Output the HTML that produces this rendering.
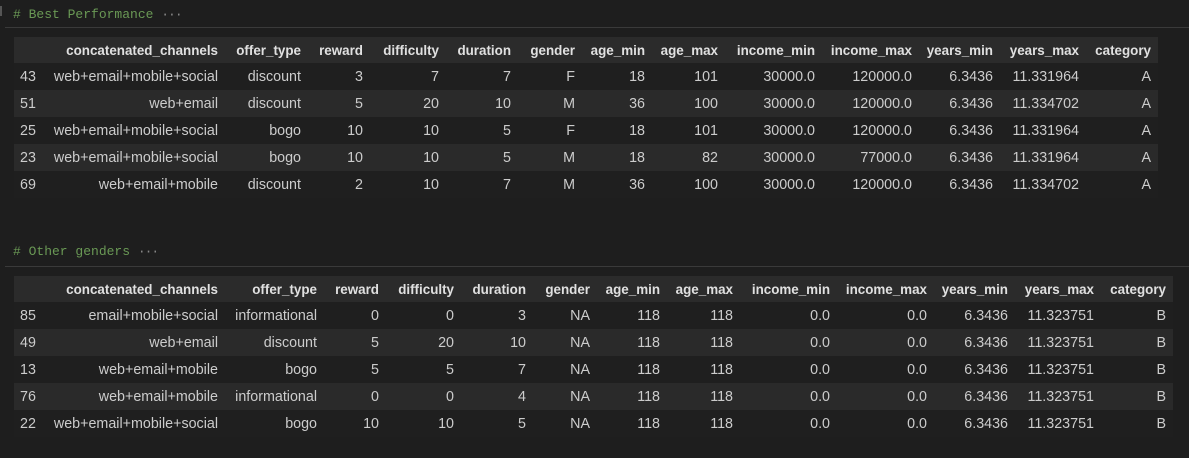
<!DOCTYPE html>
<html><head><meta charset="utf-8"><style>
body{margin:0;background:#1e1e1e;width:1189px;height:458px;overflow:hidden;position:relative;font-family:"Liberation Sans",sans-serif;}
.md{position:absolute;left:13px;font-family:"Liberation Mono",monospace;font-size:13px;color:#6a9955;}
.md span{color:#888;letter-spacing:-1px}
.sep{position:absolute;left:5px;right:0;height:1px;background:#3a3a3a;}
table{position:absolute;left:14px;border-collapse:collapse;table-layout:fixed;font-size:14.3px;color:#cccccc;}
td,th{height:27px;padding:0;text-align:right;white-space:nowrap;overflow:hidden}
th{font-weight:bold;color:#e0e0e0;height:26px;font-size:13.4px}
tr.h{background:#2b2b2b}
tr.e{background:#2a2a2a}
tr.o{background:#1f1f1f}
td.i,th.i{text-align:left;padding-left:6px}
.ed{position:absolute;left:0;top:6px;width:2px;height:10px;background:#555}
</style></head><body>
<div class="ed"></div>
<div class="md" style="top:7px"># Best Performance <span>···</span></div>
<div class="sep" style="top:27px"></div>
<table style="top:37px">
<colgroup><col style="width:36px"><col style="width:168px"><col style="width:83px"><col style="width:62px"><col style="width:76px"><col style="width:72px"><col style="width:64px"><col style="width:70px"><col style="width:73px"><col style="width:97px"><col style="width:97px"><col style="width:81px"><col style="width:86px"><col style="width:79px"></colgroup>
<tr class="h"><th class="i"></th><th>concatenated_channels</th><th>offer_type</th><th>reward</th><th>difficulty</th><th>duration</th><th>gender</th><th>age_min</th><th>age_max</th><th>income_min</th><th>income_max</th><th>years_min</th><th>years_max</th><th style="padding-right:7px">category</th></tr>
<tr class="o"><td class="i">43</td><td>web+email+mobile+social</td><td>discount</td><td>3</td><td>7</td><td>7</td><td>F</td><td>18</td><td>101</td><td>30000.0</td><td>120000.0</td><td>6.3436</td><td>11.331964</td><td style="padding-right:7px">A</td></tr>
<tr class="e"><td class="i">51</td><td>web+email</td><td>discount</td><td>5</td><td>20</td><td>10</td><td>M</td><td>36</td><td>100</td><td>30000.0</td><td>120000.0</td><td>6.3436</td><td>11.334702</td><td style="padding-right:7px">A</td></tr>
<tr class="o"><td class="i">25</td><td>web+email+mobile+social</td><td>bogo</td><td>10</td><td>10</td><td>5</td><td>F</td><td>18</td><td>101</td><td>30000.0</td><td>120000.0</td><td>6.3436</td><td>11.331964</td><td style="padding-right:7px">A</td></tr>
<tr class="e"><td class="i">23</td><td>web+email+mobile+social</td><td>bogo</td><td>10</td><td>10</td><td>5</td><td>M</td><td>18</td><td>82</td><td>30000.0</td><td>77000.0</td><td>6.3436</td><td>11.331964</td><td style="padding-right:7px">A</td></tr>
<tr class="o"><td class="i">69</td><td>web+email+mobile</td><td>discount</td><td>2</td><td>10</td><td>7</td><td>M</td><td>36</td><td>100</td><td>30000.0</td><td>120000.0</td><td>6.3436</td><td>11.334702</td><td style="padding-right:7px">A</td></tr>
</table>
<div class="md" style="top:244px"># Other genders <span>···</span></div>
<div class="sep" style="top:266px"></div>
<table style="top:276px">
<colgroup><col style="width:36px"><col style="width:168px"><col style="width:99px"><col style="width:62px"><col style="width:75px"><col style="width:72px"><col style="width:64px"><col style="width:70px"><col style="width:73px"><col style="width:97px"><col style="width:97px"><col style="width:81px"><col style="width:86px"><col style="width:79px"></colgroup>
<tr class="h"><th class="i"></th><th>concatenated_channels</th><th>offer_type</th><th>reward</th><th>difficulty</th><th>duration</th><th>gender</th><th>age_min</th><th>age_max</th><th>income_min</th><th>income_max</th><th>years_min</th><th>years_max</th><th style="padding-right:7px">category</th></tr>
<tr class="o"><td class="i">85</td><td>email+mobile+social</td><td>informational</td><td>0</td><td>0</td><td>3</td><td>NA</td><td>118</td><td>118</td><td>0.0</td><td>0.0</td><td>6.3436</td><td>11.323751</td><td style="padding-right:7px">B</td></tr>
<tr class="e"><td class="i">49</td><td>web+email</td><td>discount</td><td>5</td><td>20</td><td>10</td><td>NA</td><td>118</td><td>118</td><td>0.0</td><td>0.0</td><td>6.3436</td><td>11.323751</td><td style="padding-right:7px">B</td></tr>
<tr class="o"><td class="i">13</td><td>web+email+mobile</td><td>bogo</td><td>5</td><td>5</td><td>7</td><td>NA</td><td>118</td><td>118</td><td>0.0</td><td>0.0</td><td>6.3436</td><td>11.323751</td><td style="padding-right:7px">B</td></tr>
<tr class="e"><td class="i">76</td><td>web+email+mobile</td><td>informational</td><td>0</td><td>0</td><td>4</td><td>NA</td><td>118</td><td>118</td><td>0.0</td><td>0.0</td><td>6.3436</td><td>11.323751</td><td style="padding-right:7px">B</td></tr>
<tr class="o"><td class="i">22</td><td>web+email+mobile+social</td><td>bogo</td><td>10</td><td>10</td><td>5</td><td>NA</td><td>118</td><td>118</td><td>0.0</td><td>0.0</td><td>6.3436</td><td>11.323751</td><td style="padding-right:7px">B</td></tr>
</table>
</body></html>
